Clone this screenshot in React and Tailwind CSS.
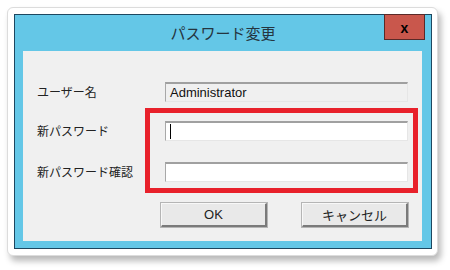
const jp = { fontFamily: '"Noto Sans CJK JP", "Noto Sans", sans-serif' }
const latin = { fontFamily: '"Liberation Sans", Arial, sans-serif' }

function Label({ children }) {
  return (
    <div className="w-[142px] shrink-0 pl-[14px] text-[12px] leading-none text-[#222]" style={jp}>
      {children}
    </div>
  )
}

function Field({ children, bg = 'bg-white' }) {
  return (
    <div
      className={`relative h-[20px] w-[243px] ${bg} border-t-2 border-l border-t-[#a0a0a0] border-l-[#a8a8a8] border-b border-r border-b-[#e6e6e6] border-r-[#e6e6e6] flex items-center pl-[4px]`}
    >
      {children}
    </div>
  )
}

function Button({ children, font }) {
  return (
    <div
      className="h-[24px] w-[106px] bg-[#e9e9e9] border-t border-l border-t-[#f8f8f8] border-l-[#f8f8f8] border-b-2 border-r-2 border-b-[#7a7a7a] border-r-[#7a7a7a] outline outline-1 outline-[#b5b5b5] flex items-center justify-center text-[13px] text-[#222]"
      style={font}
    >
      {children}
    </div>
  )
}

export default function App() {
  return (
    <div className="w-[450px] h-[270px] bg-white pt-[7px] pl-[7px]">
      <div className="w-[431px] h-[249px] rounded-[6px] bg-white border border-[#dcdcdc] shadow-[3px_5px_6px_rgba(0,0,0,0.28)] pt-[6px] pl-[6px]">
        <div className="relative w-[418px] h-[235px] bg-[#64c7e7] border border-[#1d4760] flex flex-col">
          <div className="h-[36px] flex items-center justify-center text-[15px] text-[#253540]" style={jp}>
            パスワード変更
          </div>
          <div className="absolute right-[6px] top-[-1px] w-[41px] h-[26px] bg-[#c9574c] border border-[#5a2a28] flex items-center justify-center pt-[2px] text-[14px] font-bold text-black leading-none" style={latin}>
            x
          </div>
          <div className="relative ml-[8px] w-[399px] h-[190px] bg-[#f0f0f0] pt-[31px]">
            <div className="flex items-center h-[20px]">
              <Label>ユーザー名</Label>
              <Field bg="bg-[#f0f0f0]">
                <span className="text-[13px] text-[#111]" style={latin}>Administrator</span>
              </Field>
            </div>
            <div className="flex items-center h-[20px] mt-[19px]">
              <Label>新パスワード</Label>
              <Field>
                <span className="w-px h-[15px] bg-black"></span>
              </Field>
            </div>
            <div className="flex items-center h-[20px] mt-[21px]">
              <Label>新パスワード確認</Label>
              <Field />
            </div>
            <div className="flex mt-[21px] pl-[138px] gap-[35px]">
              <Button font={latin}>OK</Button>
              <Button font={jp}>キャンセル</Button>
            </div>
            <div className="absolute left-[122px] top-[57px] w-[273px] h-[85px] border-[5px] border-[#e8212b]"></div>
          </div>
        </div>
      </div>
    </div>
  )
}
